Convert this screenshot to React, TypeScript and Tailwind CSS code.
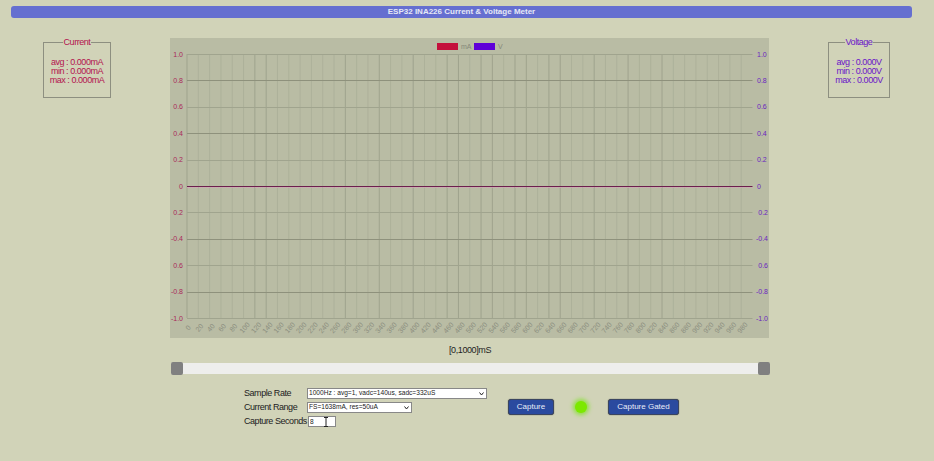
const font = "font-['Liberation_Sans',Arial,sans-serif]";

// chart geometry inside the 599x300 panel
const PLOT_LEFT = 17;
const PLOT_RIGHT = 582.5;
const PLOT_TOP = 16;
const PLOT_BOTTOM = 280;
const STEP = 11.31;

const xTicks = Array.from({ length: 50 }, (_, i) => i * 20);
const darkX = new Set([0, 120, 140, 280, 340, 400, 460, 480, 520, 540, 580, 600, 640, 660, 720, 780, 840]);

const yRows: string[] = ["1.0", "0.8", "0.6", "0.4", "0.2", "0", "0.2", "-0.4", "0.6", "-0.8", "-1.0"];

function Chart() {
  const rowH = (PLOT_BOTTOM - PLOT_TOP) / 10;
  return (
    <svg width="599" height="300" viewBox="0 0 599 300" className="block bg-[#b9bca4]" fontFamily="'Liberation Sans', Arial, sans-serif">
      {xTicks.map((t, i) => {
        const x = PLOT_LEFT + i * STEP;
        return (
          <g key={t}>
            <line
              x1={x}
              x2={x}
              y1={PLOT_TOP}
              y2={PLOT_BOTTOM}
              stroke={darkX.has(t) ? "#9fa38d" : "#adb19a"}
              strokeWidth="1"
            />
            <text
              x={x + 1.5}
              y={292}
              fontSize="7"
              fill="#8b8e7f"
              textAnchor="middle"
              transform={`rotate(-50 ${x + 1.5} 290)`}
            >
              {t}
            </text>
          </g>
        );
      })}
      {yRows.map((label, i) => {
        const y = PLOT_TOP + i * rowH;
        const isStrong = i % 2 === 1;
        const isZero = i === 5;
        return (
          <g key={i}>
            {!isZero && (
              <line
                x1={PLOT_LEFT}
                x2={PLOT_RIGHT}
                y1={Math.round(y) + 0.5}
                y2={Math.round(y) + 0.5}
                stroke={isStrong ? "#8e917c" : "#a0a48e"}
              />
            )}
            <text x={13} y={y + 2.5} fontSize="7" fill="#a9285a" textAnchor="end">
              {label}
            </text>
            {i <= 5 ? (
              <text x={587} y={y + 2.5} fontSize="7" fill="#6a25c0">
                {label}
              </text>
            ) : (
              <text x={598} y={y + 2.5} fontSize="7" fill="#6a25c0" textAnchor="end">
                {label}
              </text>
            )}
          </g>
        );
      })}
      <line x1={PLOT_LEFT} x2={PLOT_RIGHT} y1={148.5} y2={148.5} stroke="#6b1f4d" />
      <line x1={PLOT_LEFT} x2={PLOT_RIGHT} y1={149.5} y2={149.5} stroke="#d8a0b8" strokeDasharray="3 1" opacity="0.7" />
      {/* legend */}
      <rect x={267} y={5} width={21} height={7} fill="#c4103c" />
      <text x={291} y={11} fontSize="7" fill="#85887a">mA</text>
      <rect x={304} y={5} width={21} height={7} fill="#5f00d8" />
      <text x={328} y={11} fontSize="7" fill="#85887a">V</text>
    </svg>
  );
}

function Stats({ title, unit, className }: { title: string; unit: string; className: string }) {
  return (
    <fieldset className={`h-[60px] border border-[#8d8f80] text-center text-[9px] leading-[9px] tracking-[-0.45px] ${className}`}>
      <legend className="mx-auto px-[1px] text-[9px] leading-[9px]">{title}</legend>
      <div className="mt-[11px]">avg : 0.000{unit}</div>
      <div>min : 0.000{unit}</div>
      <div>max : 0.000{unit}</div>
    </fieldset>
  );
}

function Btn({ label, width }: { label: string; width: string }) {
  return (
    <button className={`mt-[11px] h-[16px] rounded-[3px] border border-[#3a4560] bg-[#2a4a9f] text-[8px] leading-none text-[#e8ecf8] shadow-[0_0_1px_#222] ${width}`}>
      {label}
    </button>
  );
}

function Select({ value, width }: { value: string; width: string }) {
  return (
    <div className={`relative h-[11px] ${width}`}>
      <select
        className="block h-full w-full appearance-none border border-[#888] bg-white pl-[1px] text-[6.6px] leading-none tracking-normal text-[#222]"
        defaultValue={value}
      >
        <option value={value}>{value}</option>
      </select>
      <svg width="5" height="4" viewBox="0 0 5 4" className="pointer-events-none absolute right-[3px] top-[4px]">
        <path d="M0.5 0.5L2.5 3L4.5 0.5" stroke="#222" strokeWidth="1" fill="none" />
      </svg>
    </div>
  );
}

export default function App() {
  return (
    <div className={`h-[461px] w-[934px] overflow-hidden bg-[#d1d3b8] pt-[6px] ${font}`}>
      <div className="ml-[11px] mr-[22px] flex h-[12px] items-center justify-center rounded-[3px] bg-[#656fd0] text-[8px] font-bold text-[#e6e8f6]">
        ESP32 INA226 Current &amp; Voltage Meter
      </div>

      <div className="mt-[20px] flex">
        <div className="w-[170px] pl-[43px]">
          <Stats title="Current" unit="mA" className="w-[68px] text-[#b3124e]" />
        </div>
        <Chart />
        <div className="flex-1 pl-[59px]">
          <Stats title="Voltage" unit="V" className="w-[62px] text-[#6a14c8]" />
        </div>
      </div>

      <div className="ml-[170px] mt-[8px] w-[600px] text-center text-[9px] leading-[9px] tracking-[-0.4px] text-[#222]">[0,1000]mS</div>

      <div className="ml-[171px] mt-[8px] flex h-[11px] w-[599px] items-center justify-between bg-[#eeeeec]">
        <div className="h-[13px] w-[12px] rounded-[2px] bg-[#808080]" />
        <div className="h-[13px] w-[12px] rounded-[2px] bg-[#808080]" />
      </div>

      <div className="ml-[244px] mt-[14px] flex items-start">
        <div className="grid w-[244px] grid-cols-[63px_1fr] items-center gap-y-[3px] text-[9px] leading-[11px] tracking-[-0.45px] text-[#222]">
          <span>Sample Rate</span>
          <Select value="1000Hz : avg=1, vadc=140us, sadc=332uS" width="w-[180px]" />
          <span>Current Range</span>
          <Select value="FS=1638mA, res=50uA" width="w-[105px]" />
          <span className="whitespace-nowrap">Capture Seconds</span>
          <div className="relative ml-[1px] h-[11px] w-[28px]">
            <input
              readOnly
              value="8"
              className="h-full w-full border border-[#888] bg-white pl-[1px] text-[6.6px] leading-none text-[#222]"
            />
            <svg width="6" height="10" viewBox="0 0 6 10" className="absolute left-[15px] top-[1px]">
              <path d="M1 0.5h4M3 0.5v9M1 9.5h4" stroke="#222" strokeWidth="1" fill="none" />
            </svg>
          </div>
        </div>
        <Btn label="Capture" width="ml-[20px] w-[46px]" />
        <div className="ml-[21px] mt-[13px] h-[12px] w-[12px] rounded-full bg-[#7ce800] shadow-[0_0_4px_2px_#8fe040]" />
        <Btn label="Capture Gated" width="ml-[21px] w-[71px]" />
      </div>
    </div>
  );
}
